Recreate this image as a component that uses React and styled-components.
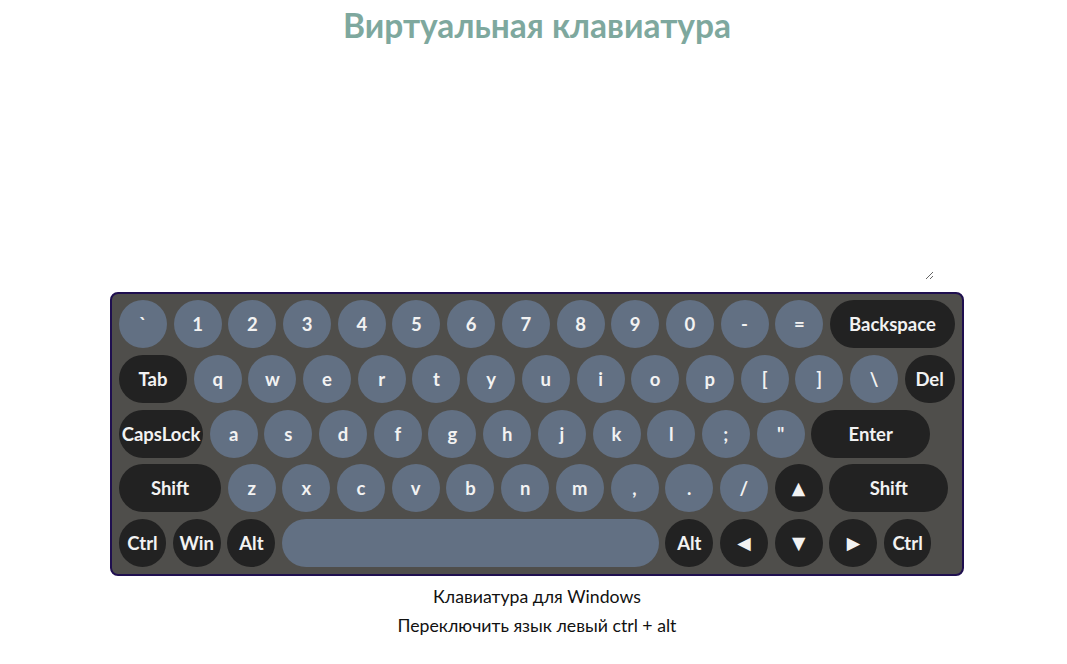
import React from "react";
import styled, { createGlobalStyle } from "styled-components";

const GlobalStyle = createGlobalStyle`
  body {
    margin: 0;
    background: #ffffff;
    font-family: "Lato", "DejaVu Sans", sans-serif;
  }
`;

const Page = styled.div`
  display: flex;
  flex-direction: column;
  align-items: center;
  padding-left: 7px;
`;

const Title = styled.h1`
  margin: 0;
  font-size: 33.5px;
  line-height: 50px;
  font-weight: 700;
  color: #7ea89e;
`;

const TextInput = styled.textarea`
  display: block;
  width: 790px;
  height: 222px;
  margin-top: 4px;
  border: none;
  outline: none;
  resize: both;
  background: transparent;
  padding: 2px;
`;

const Board = styled.div`
  box-sizing: border-box;
  width: 854px;
  margin-top: 12px;
  padding: 6px 7px 7px;
  background: #4f4e4b;
  border: 2px solid #1f0f4f;
  border-radius: 8px;
  display: flex;
  flex-direction: column;
  gap: 6.75px;
`;

const Row = styled.div`
  display: flex;
  gap: 6.7px;
`;

const Key = styled.div`
  flex: none;
  width: ${(p) => p.$w || 48}px;
  height: 48px;
  border-radius: 24px;
  background: ${(p) => (p.$dark ? "#222222" : "#627083")};
  color: #f2f2f2;
  font-family: ${(p) => (p.$arrow ? '"DejaVu Sans", sans-serif' : "inherit")};
  font-size: ${(p) => (p.$arrow ? "17.5px" : "18.5px")};
  font-weight: 700;
  display: flex;
  align-items: center;
  justify-content: center;
  white-space: nowrap;
  user-select: none;
`;

const Caption = styled.div`
  margin-top: 10px;
  display: flex;
  flex-direction: column;
  align-items: center;
  gap: 8px;
  font-size: 17.7px;
  line-height: 21px;
  color: #111111;
`;

const rows = [
  [..."`1234567890-=".split("").map((k) => ({ k })), { k: "Backspace", w: 125, d: true }],
  [
    { k: "Tab", w: 68, d: true },
    ..."qwertyuiop[]\\".split("").map((k) => ({ k })),
    { k: "Del", w: 50, d: true },
  ],
  [
    { k: "CapsLock", w: 84, d: true },
    ...["a", "s", "d", "f", "g", "h", "j", "k", "l", ";", '"'].map((k) => ({ k })),
    { k: "Enter", w: 119, d: true },
  ],
  [
    { k: "Shift", w: 102, d: true },
    ..."zxcvbnm,./".split("").map((k) => ({ k })),
    { k: "\u25B2\uFE0E", d: true, a: true },
    { k: "Shift", w: 119, d: true },
  ],
  [
    { k: "Ctrl", w: 47, d: true },
    { k: "Win", d: true },
    { k: "Alt", d: true },
    { k: "", w: 376.6 },
    { k: "Alt", d: true },
    { k: "\u25C0\uFE0E", d: true, a: true },
    { k: "\u25BC\uFE0E", d: true, a: true },
    { k: "\u25B6\uFE0E", d: true, a: true },
    { k: "Ctrl", w: 47, d: true },
  ],
];

export default function App() {
  return (
    <Page>
      <GlobalStyle />
      <Title>Виртуальная клавиатура</Title>
      <TextInput />
      <Board>
        {rows.map((row, i) => (
          <Row key={i}>
            {row.map((key, j) => (
              <Key key={j} $w={key.w} $dark={key.d} $arrow={key.a}>
                {key.k}
              </Key>
            ))}
          </Row>
        ))}
      </Board>
      <Caption>
        <div>Клавиатура для Windows</div>
        <div>Переключить язык левый ctrl + alt</div>
      </Caption>
    </Page>
  );
}
